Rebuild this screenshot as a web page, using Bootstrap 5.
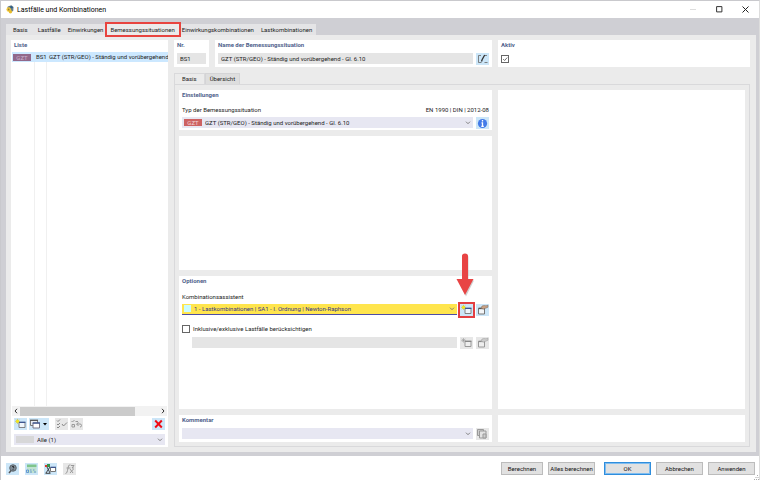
<!DOCTYPE html>
<html lang="de">
<head>
<meta charset="utf-8">
<meta name="viewport" content="width=device-width, initial-scale=1">
<title>Lastfälle und Kombinationen</title>
<link rel="stylesheet" href="https://cdn.jsdelivr.net/npm/bootstrap@5.3.0/dist/css/bootstrap.min.css">
<style>
body{font-family:Roboto,"Liberation Sans",sans-serif;font-size:6px;line-height:8px;color:#222;background:#fff}
.win{min-height:100vh;border:1px solid #c9c9cd;border-right-color:#ddd;border-bottom:0}
.titlebar{height:17px;font-size:7px;color:#000;padding:0 8px 0 5px;gap:3px}
.titlebar button{width:11px;height:11px;margin-left:12px}
button.bare{border:0;background:none;padding:0;line-height:0}
.frame{background:#cfcfd4;padding:6px 3px 4px 5px}
.tabs button{border:0;border-radius:0;background:#e4e4e6;color:#222;padding:2px 4px 1px 3px;height:11px;line-height:8px;white-space:nowrap}
.tabs button:first-child{padding:2px 7px 1px 7px}
.tabs button.active{background:#ebebeb}
.tabs .marked{outline:2px solid #e8443f;position:relative;z-index:1}
.shell{background:#ebebeb;padding:5px 6px 5px 5px;gap:6px}
.panel{background:#fff;padding:1px 3px 3px 3px}
.hd{font-size:6px;line-height:8px;font-weight:700;color:#50628c;margin:0}
.sidebar{width:157px;flex:none;padding:1px 3px 2px 1px}
.sidebar .hd{padding-left:2px;margin-bottom:3px}
.listarea{background:linear-gradient(#f0f0f0,#f0f0f0) 22px 0/1px 100% no-repeat,linear-gradient(#f0f0f0,#f0f0f0) 34px 0/1px 100% no-repeat;margin-right:-3px;overflow:hidden}
.listarea table{table-layout:fixed;width:100%;margin:0}
.listarea td{padding:0;height:10px;line-height:10px;white-space:nowrap;background:#cce8ff;vertical-align:middle}
.tag{background:#cd6262;color:#f2d5d5;width:18px;height:7px;line-height:7px;text-align:center;display:block;flex:none}
.tag.sel{background:#91688a;color:#c9b0cc;margin-left:1px}
.scroll{height:10px;background:#f2f2f2;margin-right:-2px}
.scroll .thumb{background:#cbcbcb;height:9px;width:115px}
.scroll svg{margin:0 2px}
.tool{width:13px;height:12px;border:0;padding:0;background:#cce6f8;line-height:0;flex:none;display:flex;align-items:center;justify-content:center}
.tool.off{background:#e7e7e7}
.tool.wide{width:20px}
.tool.red{outline:2px solid #e23f42;outline-offset:0}
.tools{padding:2px 0 4px 2px;gap:2px}
.filter{padding-left:2px}
.pick{background:#e7e7f2;height:11px;padding:0 2px 0 2px;margin:0}
.pick select,.field{border:0;background:transparent;appearance:none;padding:0 0 0 3px;margin:0;font:inherit;line-height:11px;height:11px;color:#222;flex:1 1 0;min-width:0;outline:0;border-radius:0}
.field{background:#e5e5e5;width:100%}
.pick svg{flex:none}
.swatch{width:18px;height:7px;background:#d7d7d8;flex:none}
.swatch.cy{width:7px;background:#c9fbff}
.pick.hot{background:#ffe54d;border-bottom:1px solid #4d4da6}
.pick.hot select{color:#35358a;line-height:10px;height:10px}
.fieldrow{gap:3px}
.colA{flex:318 1 0;min-width:0}
.colB{flex:252 1 0;min-width:0}
.toprow{height:27px}
.nr{width:35px;flex:none}
.toprow .hd{margin-bottom:4px}
.toprow .box{margin:6px 0 0 0}
.inner-tabs{margin-top:6px}
.inner-tabs button{border:1px solid #d4d4d6;border-bottom:0;border-radius:0;background:#dedede;color:#222;padding:1px 4px;height:11px;line-height:8px}
.inner-tabs button.active{background:#ebebeb;padding:1px 7px;border-color:#d9d9db}
.inner{border:1px solid #d9d9db;padding:5px 4px 4px 4px;gap:6px}
.inA{flex:313 1 0;min-width:0}
.inB{flex:247 1 0;min-width:0}
.stack{gap:6px}
.lab{line-height:8px;display:block}
.einst{height:40px}
.einst .labrow{margin:7px 0 3px}
.grow0{flex:1 1 0}
.opt .lab{margin-top:8px;margin-bottom:3px}
.opt .chk{margin-top:9px;line-height:8px}
input.box{appearance:none;width:8px;height:8px;border:1px solid #666;border-radius:0;background:#fff;flex:none}
input.box:checked{background:#fff url("data:image/svg+xml,%3Csvg xmlns='http://www.w3.org/2000/svg' viewBox='0 0 8 8'%3E%3Cpath d='M1.5 4l2 2L7 2' fill='none' stroke='%23444'/%3E%3C/svg%3E") center/100%}
.indent{margin:4px 0 0 10px}
.komm{height:27px}
.komm .hd{margin-bottom:4px}
.arrow{position:absolute;right:17px;top:-24px}
.foot{padding:6px 4px 5px 5px;gap:6px}
.cmds{gap:5px}
.foot .cmd{border:1px solid #bcbcbc;background:#e1e1e1;border-radius:0;width:47px;height:13px;padding:0;font-size:6px;line-height:10px;color:#111;white-space:nowrap}
.foot .cmd.def{border:1px solid #2f8ddc;outline:1px solid #7fbdf0;outline-offset:-2px}
.foot .cmd.s{width:42px}
.grip{position:absolute;right:0;bottom:0;line-height:0}
</style>
<script src="https://cdn.jsdelivr.net/npm/bootstrap@5.3.0/dist/js/bootstrap.bundle.min.js"></script>
</head>
<body>
<svg class="d-none" xmlns="http://www.w3.org/2000/svg">
<symbol id="dn" viewBox="0 0 6 4"><path d="M1 .7l2 2 2-2" fill="none" stroke="#777" stroke-width=".9"/></symbol>
<symbol id="new" viewBox="0 0 13 12"><path d="M5 4.500h6v5h-6z" fill="#eef5fb" stroke="#777" stroke-width=".9"/><path d="M5 4.300h6.500" stroke="#3a5490" stroke-width="1.300"/><path d="M3.500.8v5M1 3.300h5M1.700 1.500l3.600 3.600M5.300 1.500L1.700 5.100" stroke="#b8b42a" stroke-width=".6"/><circle cx="3.500" cy="3.300" r="1.500" fill="#f6e618"/></symbol>
<symbol id="newg" viewBox="0 0 13 12"><path d="M5 4.500h6v5h-6z" fill="#eee" stroke="#999"/><path d="M5 4.300h6.500" stroke="#888" stroke-width="1.400"/><path d="M3.500 1v4.600M1.200 3.300h4.600M1.900 1.700l3.200 3.200M5.100 1.700L1.900 4.900" stroke="#999" stroke-width=".6"/></symbol>
<symbol id="edit" viewBox="0 0 13 12"><path d="M2.500 4.500h6v5.500h-6z" fill="#f4f6f8" stroke="#777"/><path d="M2.500 4.400H9" stroke="#555" stroke-width="1.500"/><path d="M5 4.200l1-2.200 2-.5 2 .3 2-.6v2L9.500 4.300l-2 .8z" fill="#c9a184" stroke="#76685f" stroke-width=".5"/></symbol>
<symbol id="editg" viewBox="0 0 13 12"><path d="M2.500 4.500h6v5.500h-6z" fill="#eee" stroke="#999"/><path d="M2.500 4.400H9" stroke="#888" stroke-width="1.400"/><path d="M5 4.200l1-2.200 2-.5 2 .3 2-.6v2L9.500 4.300l-2 .8z" fill="#ccc" stroke="#999" stroke-width=".5"/></symbol>
</svg>
<div class="win d-flex flex-column position-relative">
 <header class="titlebar d-flex align-items-center">
  <svg width="8" height="9" viewBox="0 0 9 10"><path d="M2 1.500L6 .3l2.500 2-.3 4L6 8 4 3 1 5z" fill="#6b7f8b"/><path d="M4 1.800L6.500 1 8 3 5.500 4z" fill="#2d5f88"/><circle cx="3" cy="5" r="2.500" fill="#f5c936"/><circle cx="5" cy="7.500" r="1.900" fill="#e8bd2b"/><circle cx="3" cy="5" r="1" fill="#937d38"/></svg>
  <span class="me-auto">Lastfälle und Kombinationen</span>
  <button class="bare" aria-label="Minimieren"><svg width="7" height="7"><path d="M0 3.500h6" stroke="#ddd"/></svg></button>
  <button class="bare" aria-label="Maximieren"><svg width="7" height="7"><path d="M.6.6h5.300v5.300H.6z" fill="none" stroke="#333"/></svg></button>
  <button class="bare" aria-label="Schließen"><svg width="7" height="7"><path d="M.5.5l6 6M6.500.5l-6 6" stroke="#222"/></svg></button>
 </header>
 <main class="frame d-flex flex-column flex-fill">
  <nav class="tabs d-flex">
   <button>Basis</button><button>Lastfälle</button><button>Einwirkungen</button><button class="active marked">Bemessungssituationen</button><button>Einwirkungskombinationen</button><button>Lastkombinationen</button>
  </nav>
  <div class="shell d-flex flex-fill">
   <aside class="panel sidebar d-flex flex-column">
    <h2 class="hd">Liste</h2>
    <div class="listarea flex-fill">
     <table><colgroup><col style="width:24px"><col style="width:13px"><col></colgroup>
      <tbody><tr><td><span class="tag sel">GZT</span></td><td>BS1</td><td>GZT (STR/GEO) - Ständig und vorübergehend</td></tr></tbody></table>
    </div>
    <div class="scroll d-flex align-items-center"><svg width="4" height="6"><path d="M3 .8L1 3l2 2.200" fill="none" stroke="#333"/></svg><div class="thumb"></div><svg class="ms-auto" width="4" height="6"><path d="M1 .8L3 3 1 5.200" fill="none" stroke="#333"/></svg></div>
    <div class="tools d-flex">
     <button class="tool" aria-label="Neu"><svg width="13" height="12"><use href="#new"/></svg></button>
     <button class="tool wide" aria-label="Kopieren"><svg width="20" height="12" viewBox="0 0 20 12"><path d="M1.500 2.500h7v5h-7z" fill="#e8edf2" stroke="#777"/><path d="M1 2.300h8" stroke="#555" stroke-width="1.300"/><path d="M4 5h6.500v5H4z" fill="#fff" stroke="#778"/><path d="M3.600 5h7.400" stroke="#3a5490" stroke-width="1.300"/><path d="M14 5h4l-2 2.500z" fill="#000"/></svg></button>
     <button class="tool off ms-1" aria-label="Alle wählen"><svg width="13" height="12" fill="none" stroke="#888"><path d="M2 2.500l1 1 2-2M2 6l1 1 2-2M2 9l1 1 2-2M7 6l1.500 2L12 4.500"/></svg></button>
     <button class="tool off" aria-label="Auswahl umkehren"><svg width="13" height="12" fill="none" stroke="#999"><path d="M1.500 3l1 1 2-2M2 6.500h2.500V9H2zM5.500 3.500h2.500M7 6h3q1.500 0 1.500 1.500T10 9M8.500 4.500L6.500 6l2 2"/></svg></button>
     <button class="tool ms-auto" aria-label="Löschen"><svg width="13" height="12"><path d="M3.200 2.500l6.600 7M9.800 2.500l-6.600 7" stroke="#f00b14" stroke-width="1.900"/></svg></button>
    </div>
    <div class="filter"><div class="pick d-flex align-items-center"><span class="swatch"></span><select aria-label="Filter"><option>Alle (1)</option></select><svg width="6" height="4"><use href="#dn"/></svg></div></div>
   </aside>
   <section class="d-flex flex-column flex-fill">
    <div class="toprow d-flex stack">
     <div class="colA d-flex stack">
      <div class="panel nr"><label class="hd d-block" for="nr">Nr.</label><input class="field d-block" id="nr" value="BS1" readonly></div>
      <div class="panel flex-fill"><label class="hd d-block" for="nm">Name der Bemessungssituation</label>
       <div class="fieldrow d-flex"><input class="field" id="nm" value="GZT (STR/GEO) - Ständig und vorübergehend - Gl. 6.10" readonly><button class="tool" aria-label="Name bearbeiten"><svg width="13" height="12" fill="none" stroke="#666" stroke-width=".8"><path d="M5 2.500H2.500v7h3M8.500 9.500h3M9 2.500h2"/><path d="M5.500 8.500l.7-2L8.700 2" stroke="#333" stroke-width="1.300"/></svg></button></div></div>
     </div>
     <div class="colB d-flex"><div class="panel flex-fill"><label class="hd d-block mb-0" for="ak">Aktiv</label><input class="box d-block" type="checkbox" id="ak" checked></div></div>
    </div>
    <nav class="inner-tabs d-flex"><button class="active">Basis</button><button>Übersicht</button></nav>
    <div class="inner d-flex flex-fill">
     <div class="inA d-flex flex-column stack">
      <div class="panel einst">
       <h2 class="hd">Einstellungen</h2>
       <div class="labrow d-flex justify-content-between"><label for="typ">Typ der Bemessungssituation</label><span>EN 1990 | DIN | 2012-08</span></div>
       <div class="fieldrow d-flex"><div class="pick d-flex align-items-center flex-fill"><span class="tag">GZT</span><select id="typ"><option>GZT (STR/GEO) - Ständig und vorübergehend - Gl. 6.10</option></select><svg width="6" height="4"><use href="#dn"/></svg></div>
       <button class="tool" aria-label="Information"><svg width="11" height="11"><circle cx="5.500" cy="5.500" r="4.600" fill="#437be8"/><path d="M5.500 2v1.500M4.500 4.800h1v3.400M4.300 8.300h2.500" stroke="#fff" stroke-width="1.300" fill="none"/></svg></button></div>
      </div>
      <div class="panel grow0"></div>
      <div class="panel opt grow0 position-relative">
       <svg class="arrow" width="20" height="46" viewBox="0 0 20 46"><path d="M7.500 4q0-2.500 2.500-2.500T12.500 4v23H18l-8 16L2 27h5.500z" fill="#777" opacity=".35" transform="translate(1 1.500)"/><path d="M7 4q0-2.500 3-2.500T13 4v23h5.500L10 43 1.500 27H7z" fill="#e84444"/></svg>
       <h2 class="hd">Optionen</h2>
       <label class="lab" for="ka">Kombinationsassistent</label>
       <div class="fieldrow d-flex"><div class="pick hot d-flex align-items-center flex-fill"><span class="swatch cy"></span><select id="ka"><option>1 - Lastkombinationen | SA1 - I. Ordnung | Newton-Raphson</option></select><svg width="6" height="4"><use href="#dn"/></svg></div>
       <button class="tool red" aria-label="Neu"><svg width="13" height="12"><use href="#new"/></svg></button><button class="tool" aria-label="Bearbeiten"><svg width="13" height="12"><use href="#edit"/></svg></button></div>
       <div class="chk d-flex align-items-center fieldrow"><input class="box" type="checkbox" id="ie"><label for="ie">Inklusive/exklusive Lastfälle berücksichtigen</label></div>
       <div class="fieldrow d-flex indent"><input class="field" aria-label="Lastfälle" disabled>
       <button class="tool off" aria-label="Neu"><svg width="13" height="12"><use href="#newg"/></svg></button><button class="tool off" aria-label="Bearbeiten"><svg width="13" height="12"><use href="#editg"/></svg></button></div>
      </div>
      <div class="panel komm"><label class="hd d-block" for="ko">Kommentar</label>
       <div class="fieldrow d-flex"><div class="pick d-flex align-items-center flex-fill"><select id="ko"><option></option></select><svg width="6" height="4"><use href="#dn"/></svg></div><button class="tool off" aria-label="Kommentar wählen"><svg width="13" height="12" fill="#ccc" stroke="#999"><path d="M1.500 1.500h6v6h-6z"/><path d="M3.500 3h6.500v7H3.500z" fill="#e2e2e2"/><path d="M7 6h3v4H7z"/></svg></button></div></div>
     </div>
     <div class="inB d-flex flex-column stack"><div class="panel flex-fill"></div><div class="panel komm"></div></div>
    </div>
   </section>
  </div>
 </main>
 <footer class="foot d-flex align-items-center">
  <button class="tool" aria-label="Hilfe"><svg width="13" height="12"><path d="M3 10l2.500-3" stroke="#555" stroke-width="1.500"/><circle cx="7" cy="5" r="3.300" fill="#7f8c97" stroke="#4c555c" stroke-width=".8"/><path d="M6 4q1-1.500 2 0 0 .8-1 1.200M7 6.300v.9" stroke="#111" stroke-width=".8" fill="none"/></svg></button>
  <button class="tool" aria-label="Einheiten"><svg width="13" height="12"><path d="M2 1.500h9.500v2.500H2z" fill="#7fc58c"/><path d="M2 4h9.500v6H2z" fill="#bfe2d0"/><path d="M1.500 7h2v2.500h-2zM5 7h1.500M8 7h1.500M5 9h2M9 9h2" stroke="#4f86cf" stroke-width=".8" fill="none"/></svg></button>
  <button class="tool" aria-label="Anzeige"><svg width="13" height="12"><path d="M1 2h2.500v2H1z" fill="#d93a2f"/><path d="M3 1h3v3H3z" fill="#34944b"/><path d="M3 4l3 6M6 4L2 10M1.500 10.300h5" stroke="#333" stroke-width=".9" fill="none"/><path d="M6.500 4.500h5v4h-5z" fill="#fff" stroke="#777"/><path d="M6.500 4.300H12" stroke="#3a5490" stroke-width="1.200"/></svg></button>
  <button class="tool off" aria-label="Formel"><svg width="13" height="12" fill="none" stroke="#999"><path d="M2.500 10.500q1.500 0 2-3L5.500 3q.5-1.500 2-1M3.500 5h4M8 2.500h3L9 5h2M7 6l3 4M10.500 6L7 10"/></svg></button>
  <div class="cmds d-flex ms-auto"><button class="cmd s">Berechnen</button><button class="cmd me-1">Alles berechnen</button><button class="cmd def">OK</button><button class="cmd">Abbrechen</button><button class="cmd">Anwenden</button></div>
 </footer>
 <span class="grip"><svg width="5" height="5"><path d="M3 0h1v1H3zM1.500 2h1v1h-1zM3.500 2h1v1h-1zM0 4h1v1H0zM2 4h1v1H2zM4 4h1v1H4z" fill="#aaa"/></svg></span>
</div>
</body>
</html>
